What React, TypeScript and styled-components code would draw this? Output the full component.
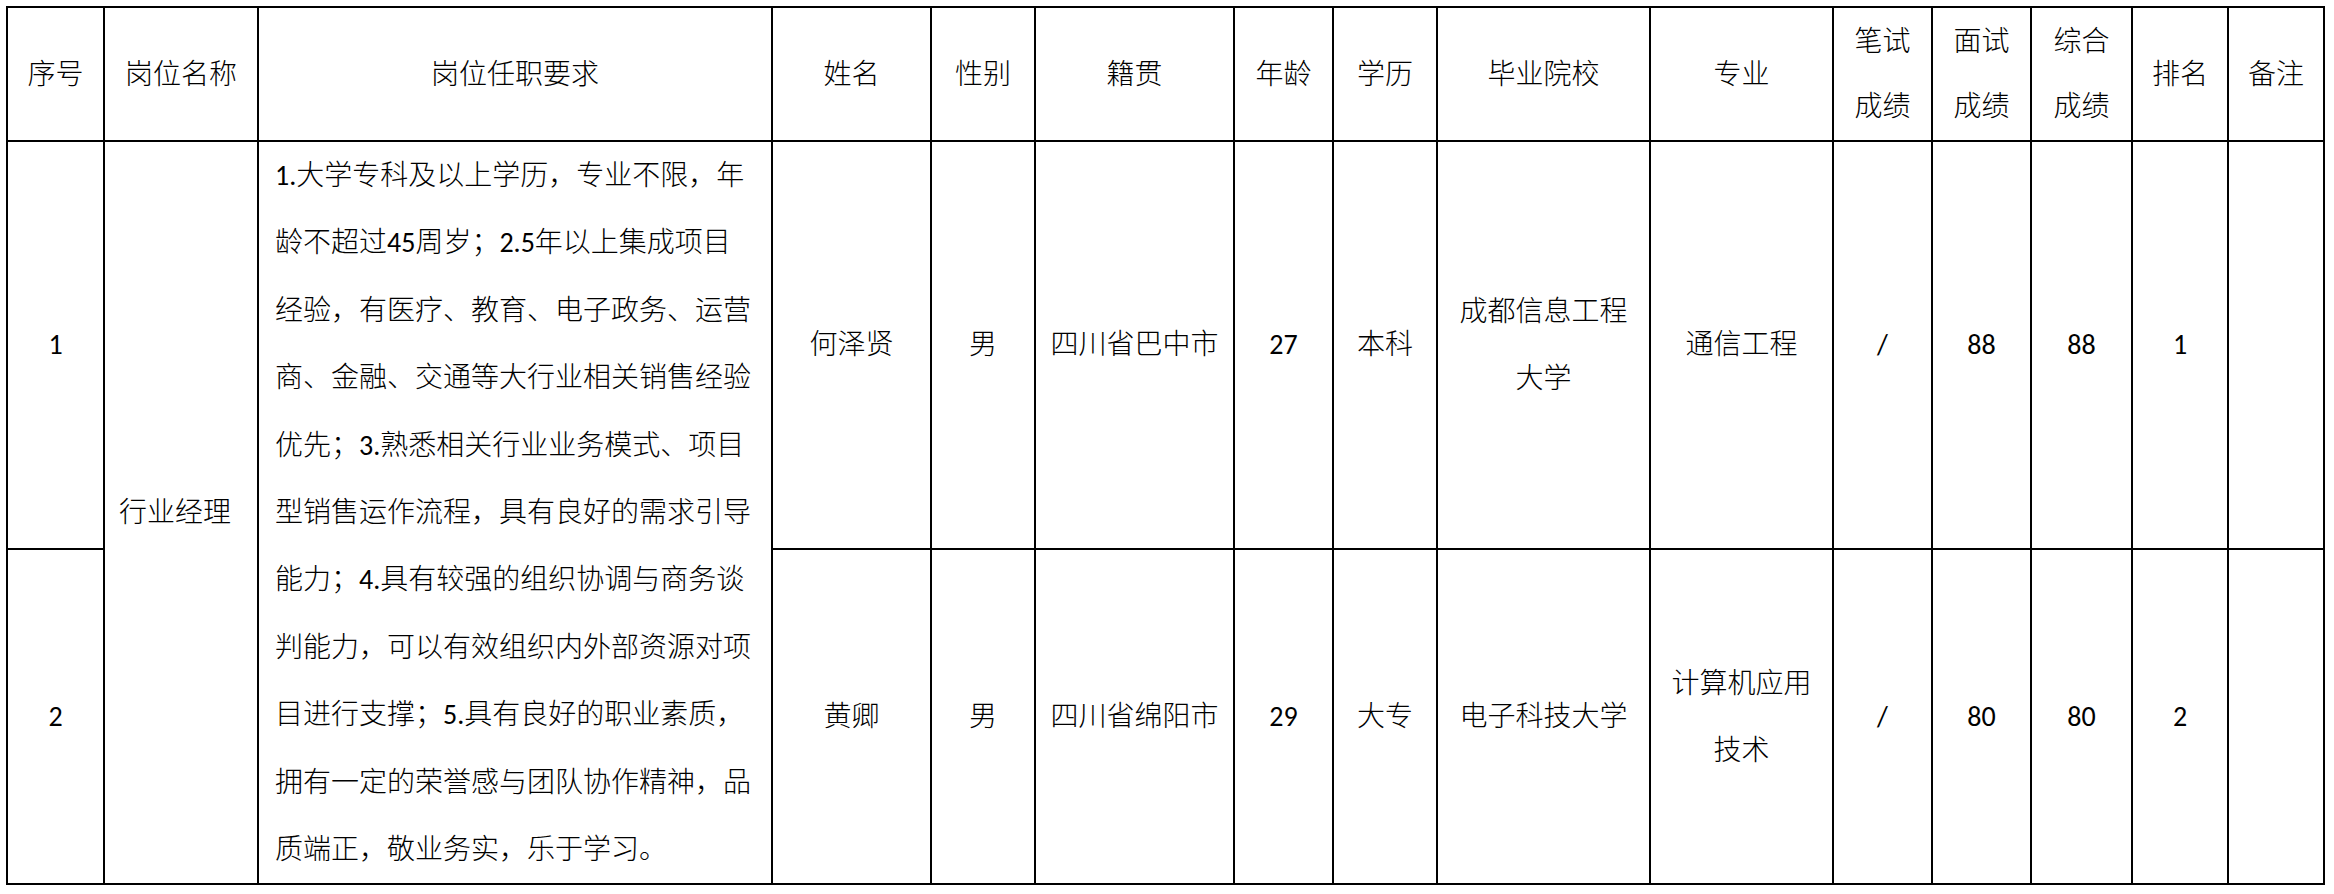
import React from 'react'
import styled, { createGlobalStyle } from 'styled-components'

const GlobalStyle = createGlobalStyle`
  body {
    margin: 0;
    background: #fff;
  }
`

type Column = { title: string[]; width: number }

const columns: Column[] = [
  { title: ['序号'], width: 97 },
  { title: ['岗位名称'], width: 154 },
  { title: ['岗位任职要求'], width: 514 },
  { title: ['姓名'], width: 159 },
  { title: ['性别'], width: 104 },
  { title: ['籍贯'], width: 199 },
  { title: ['年龄'], width: 99 },
  { title: ['学历'], width: 104 },
  { title: ['毕业院校'], width: 213 },
  { title: ['专业'], width: 183 },
  { title: ['笔试', '成绩'], width: 99 },
  { title: ['面试', '成绩'], width: 99 },
  { title: ['综合', '成绩'], width: 101 },
  { title: ['排名'], width: 96 },
  { title: ['备注'], width: 96 },
]

const requirement = [
  '1.大学专科及以上学历，专业不限，年',
  '龄不超过45周岁；2.5年以上集成项目',
  '经验，有医疗、教育、电子政务、运营',
  '商、金融、交通等大行业相关销售经验',
  '优先；3.熟悉相关行业业务模式、项目',
  '型销售运作流程，具有良好的需求引导',
  '能力；4.具有较强的组织协调与商务谈',
  '判能力，可以有效组织内外部资源对项',
  '目进行支撑；5.具有良好的职业素质，',
  '拥有一定的荣誉感与团队协作精神，品',
  '质端正，敬业务实，乐于学习。',
]

type Candidate = {
  no: string
  name: string
  gender: string
  origin: string
  age: string
  degree: string
  school: string[]
  major: string[]
  written: string
  interview: string
  total: string
  rank: string
  height: number
}

const candidates: Candidate[] = [
  {
    no: '1',
    name: '何泽贤',
    gender: '男',
    origin: '四川省巴中市',
    age: '27',
    degree: '本科',
    school: ['成都信息工程', '大学'],
    major: ['通信工程'],
    written: '/',
    interview: '88',
    total: '88',
    rank: '1',
    height: 407,
  },
  {
    no: '2',
    name: '黄卿',
    gender: '男',
    origin: '四川省绵阳市',
    age: '29',
    degree: '大专',
    school: ['电子科技大学'],
    major: ['计算机应用', '技术'],
    written: '/',
    interview: '80',
    total: '80',
    rank: '2',
    height: 335,
  },
]

const font = `"Carlito", "Noto Sans CJK SC", "Noto Sans", sans-serif`

const Page = styled.div`
  padding: 6px 0 0 6px;
  font-family: ${font};
  font-weight: 300;
  color: #000;
`

const Table = styled.table`
  border-collapse: collapse;
  table-layout: fixed;
  width: 2319px;
  border: 2px solid #000;
`

const Col = styled.col<{ $w: number }>`
  width: ${(p) => p.$w}px;
`

const Row = styled.tr<{ $h: number }>`
  height: ${(p) => p.$h}px;
`

const Head = styled.th`
  border: 2px solid #000;
  padding: 0;
  font-weight: 300;
  font-size: 28px;
  line-height: 65px;
  text-align: center;
  vertical-align: middle;
`

const Cell = styled.td`
  border: 2px solid #000;
  padding: 0 6px;
  font-size: 28px;
  line-height: 67px;
  text-align: center;
  vertical-align: middle;
  white-space: nowrap;
`

const TitleCell = styled(Cell)`
  text-align: left;
  padding-left: 14px;
`

const RequirementCell = styled(Cell)`
  text-align: left;
  padding: 0 0 0 16px;
  line-height: 67.4px;
`

const Line = styled.div`
  white-space: nowrap;
`

const Lines: React.FC<{ items: string[] }> = ({ items }) => (
  <>
    {items.map((t, i) => (
      <Line key={i}>{t}</Line>
    ))}
  </>
)

const App: React.FC = () => {
  return (
    <Page>
      <GlobalStyle />
      <Table>
        <colgroup>
          {columns.map((c, i) => (
            <Col key={i} $w={c.width} />
          ))}
        </colgroup>
        <thead>
          <Row $h={134}>
            {columns.map((c, i) => (
              <Head key={i}>
                <Lines items={c.title} />
              </Head>
            ))}
          </Row>
        </thead>
        <tbody>
          {candidates.map((c, i) => (
            <Row key={c.no} $h={c.height}>
              <Cell>{c.no}</Cell>
              {i === 0 && (
                <>
                  <TitleCell rowSpan={2}>行业经理</TitleCell>
                  <RequirementCell rowSpan={2}>
                    <Lines items={requirement} />
                  </RequirementCell>
                </>
              )}
              <Cell>{c.name}</Cell>
              <Cell>{c.gender}</Cell>
              <Cell>{c.origin}</Cell>
              <Cell>{c.age}</Cell>
              <Cell>{c.degree}</Cell>
              <Cell>
                <Lines items={c.school} />
              </Cell>
              <Cell>
                <Lines items={c.major} />
              </Cell>
              <Cell>{c.written}</Cell>
              <Cell>{c.interview}</Cell>
              <Cell>{c.total}</Cell>
              <Cell>{c.rank}</Cell>
              <Cell />
            </Row>
          ))}
        </tbody>
      </Table>
    </Page>
  )
}

export default App
